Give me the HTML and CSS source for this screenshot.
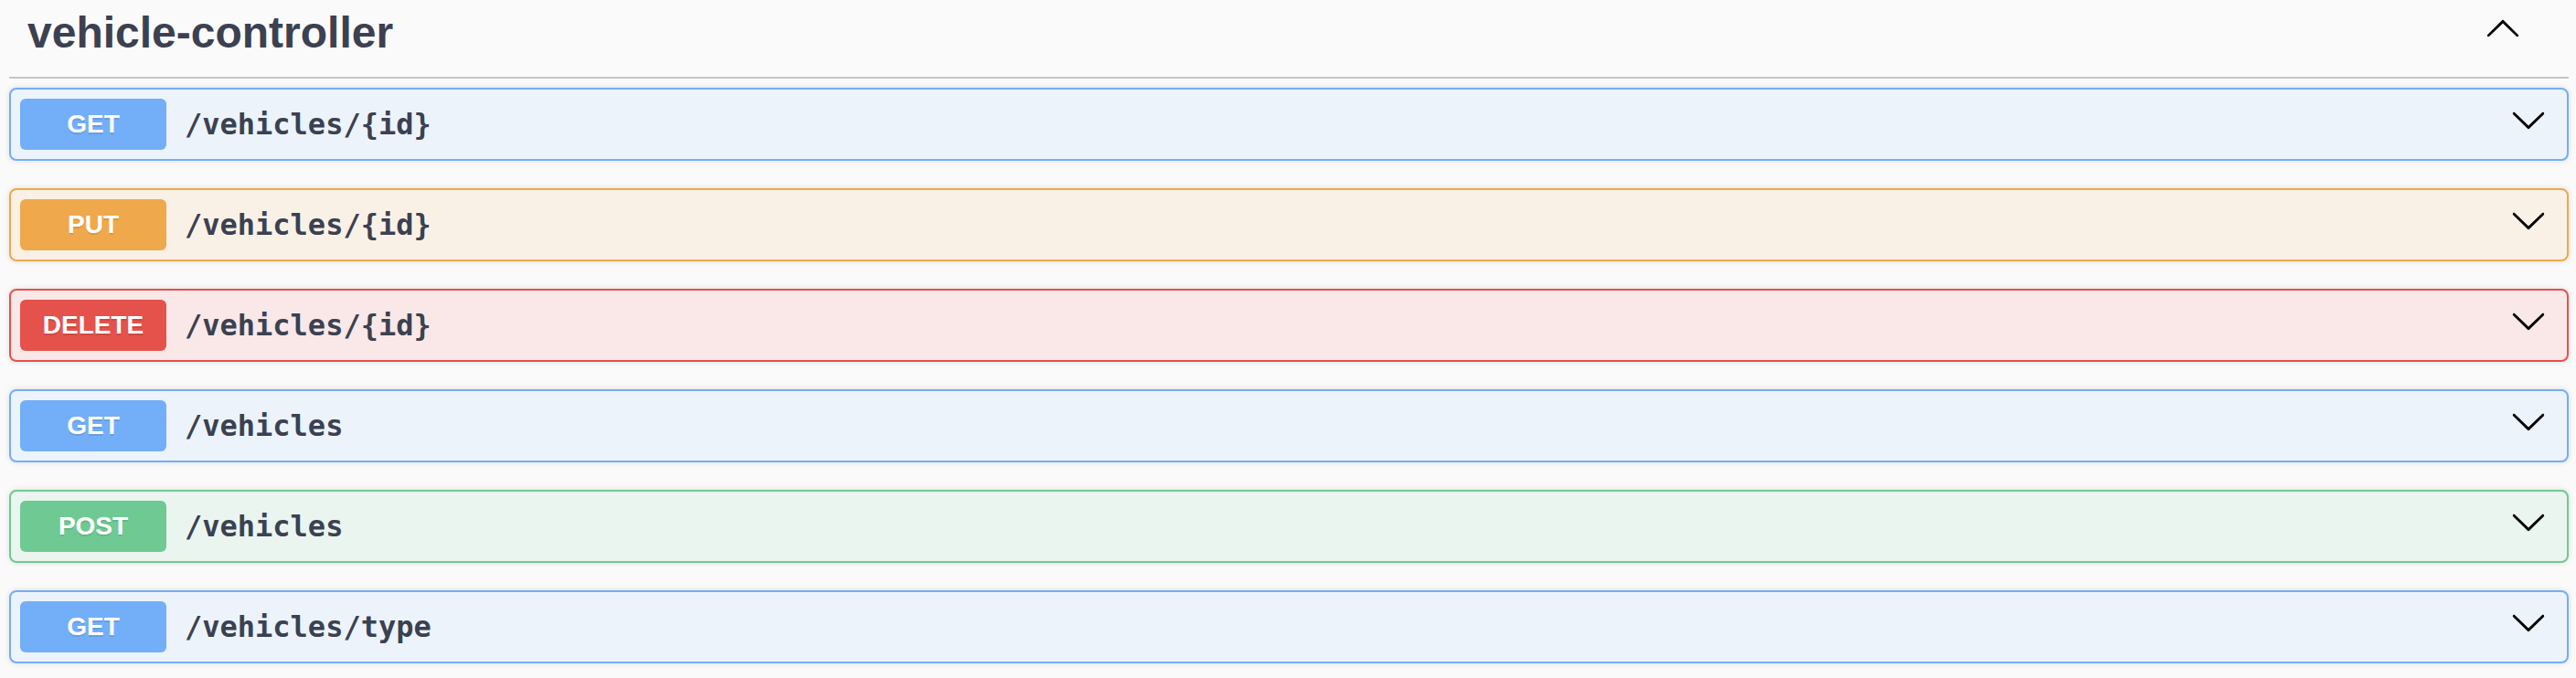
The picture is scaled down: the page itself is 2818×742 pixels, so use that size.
FILE: index.html
```html
<!DOCTYPE html>
<html lang="en">
<head>
<meta charset="utf-8">
<title>vehicle-controller</title>
<link rel="stylesheet" href="styles.css">
</head>
<body>
<div class="tag-section">
  <div class="tag-header">
    <h3 class="tag-title">vehicle-controller</h3>
    <span class="tag-toggle">
      <svg class="arrow" viewBox="0 0 20 20" width="40" height="40"><path d="M17.418 14.908c.272.268.709.268.979 0s.271-.701 0-.969l-7.908-7.83c-.27-.268-.707-.268-.979 0l-7.908 7.83c-.27.268-.27.701 0 .969.271.268.709.268.979 0L10 7.767l7.418 7.141z"/></svg>
    </span>
  </div>
  <div class="ops">
    <div class="opblock get">
      <div class="summary">
        <span class="method">GET</span>
        <span class="path">/vehicles/{id}</span>
        <svg class="arrow chev" viewBox="0 0 20 20" width="40" height="40"><path d="M17.418 6.109c.272-.268.709-.268.979 0s.271.701 0 .969l-7.908 7.83c-.27.268-.707.268-.979 0l-7.908-7.83c-.27-.268-.27-.701 0-.969.271-.268.709-.268.979 0L10 13.25l7.418-7.141z"/></svg>
      </div>
    </div>
    <div class="opblock put">
      <div class="summary">
        <span class="method">PUT</span>
        <span class="path">/vehicles/{id}</span>
        <svg class="arrow chev" viewBox="0 0 20 20" width="40" height="40"><path d="M17.418 6.109c.272-.268.709-.268.979 0s.271.701 0 .969l-7.908 7.83c-.27.268-.707.268-.979 0l-7.908-7.830c-.27-.268-.27-.701 0-.969.271-.268.709-.268.979 0L10 13.25l7.418-7.141z"/></svg>
      </div>
    </div>
    <div class="opblock delete">
      <div class="summary">
        <span class="method">DELETE</span>
        <span class="path">/vehicles/{id}</span>
        <svg class="arrow chev" viewBox="0 0 20 20" width="40" height="40"><path d="M17.418 6.109c.272-.268.709-.268.979 0s.271.701 0 .969l-7.908 7.83c-.27.268-.707.268-.979 0l-7.908-7.83c-.27-.268-.27-.701 0-.969.271-.268.709-.268.979 0L10 13.25l7.418-7.141z"/></svg>
      </div>
    </div>
    <div class="opblock get">
      <div class="summary">
        <span class="method">GET</span>
        <span class="path">/vehicles</span>
        <svg class="arrow chev" viewBox="0 0 20 20" width="40" height="40"><path d="M17.418 6.109c.272-.268.709-.268.979 0s.271.701 0 .969l-7.908 7.83c-.27.268-.707.268-.979 0l-7.908-7.83c-.27-.268-.27-.701 0-.969.271-.268.709-.268.979 0L10 13.25l7.418-7.141z"/></svg>
      </div>
    </div>
    <div class="opblock post">
      <div class="summary">
        <span class="method">POST</span>
        <span class="path">/vehicles</span>
        <svg class="arrow chev" viewBox="0 0 20 20" width="40" height="40"><path d="M17.418 6.109c.272-.268.709-.268.979 0s.271.701 0 .969l-7.908 7.83c-.27.268-.707.268-.979 0l-7.908-7.83c-.27-.268-.27-.701 0-.969.271-.268.709-.268.979 0L10 13.25l7.418-7.141z"/></svg>
      </div>
    </div>
    <div class="opblock get">
      <div class="summary">
        <span class="method">GET</span>
        <span class="path">/vehicles/type</span>
        <svg class="arrow chev" viewBox="0 0 20 20" width="40" height="40"><path d="M17.418 6.109c.272-.268.709-.268.979 0s.271.701 0 .969l-7.908 7.83c-.27.268-.707.268-.979 0l-7.908-7.83c-.27-.268-.27-.701 0-.969.271-.268.709-.268.979 0L10 13.25l7.418-7.141z"/></svg>
      </div>
    </div>
  </div>
</div>
</body>
</html>
```

FILE: styles.css
```css
html, body {
  margin: 0;
  padding: 0;
  background: #fafafa;
  overflow: hidden;
}

body {
  font-family: "Liberation Sans", Arial, sans-serif;
  color: #3b4151;
}

.tag-section {
  padding: 0 8px 16px 10px;
}

.tag-header {
  display: flex;
  align-items: center;
  height: 86px;
  box-sizing: border-box;
  padding: 0 52px 12px 20px;
  border-bottom: 2px solid #c4c5c8;
  margin-bottom: 10px;
}

.tag-title {
  flex: 1;
  margin: 0;
  font-size: 48px;
  line-height: 48px;
  font-weight: 700;
  color: #3b4151;
}

.tag-toggle {
  align-self: flex-start;
  margin-top: 10px;
  display: flex;
}

.arrow {
  display: block;
  fill: #000;
}

.opblock {
  border: 2px solid;
  border-radius: 8px;
  margin-bottom: 30px;
  box-shadow: 0 0 6px rgba(0, 0, 0, 0.12);
}

.opblock:last-child {
  margin-bottom: 0;
}

.summary {
  display: flex;
  align-items: center;
  padding: 10px;
}

.method {
  min-width: 160px;
  height: 56px;
  line-height: 56px;
  border-radius: 6px;
  text-align: center;
  font-size: 28px;
  font-weight: 700;
  color: #fff;
  text-shadow: 0 2px 0 rgba(0, 0, 0, 0.1);
}

.path {
  flex: 1;
  padding: 0 20px;
  font-family: "DejaVu Sans Mono", "Liberation Mono", monospace;
  font-size: 32px;
  font-weight: 700;
  color: #3b4151;
}

.chev {
  margin: 0 12px 10px 0;
}

.get {
  background: #ecf3fb;
  border-color: #73aef8;
}
.get .method { background: #73aef8; }

.put {
  background: #faf1e6;
  border-color: #efa84b;
}
.put .method { background: #efa84b; }

.delete {
  background: #f9e8e7;
  border-color: #e5514b;
}
.delete .method { background: #e5514b; }

.post {
  background: #ebf5f0;
  border-color: #6fc993;
}
.post .method { background: #6fc993; }
```
